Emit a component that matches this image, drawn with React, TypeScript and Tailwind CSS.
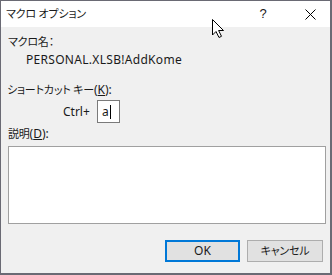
import React from "react";

const base = {
  fontFamily: '"Noto Sans", "Noto Sans CJK JP", sans-serif',
  fontFeatureSettings: '"palt"',
};

// Japanese runs: the original Meiryo UI glyphs are narrower than Noto's
function J({ children }: { children: React.ReactNode }) {
  return <span className="text-[11px] tracking-[-0.2px]">{children}</span>;
}

// Mouse pointer captured in the screenshot
function Cursor() {
  return (
    <svg
      className="absolute left-[210px] top-[17px]"
      width="14"
      height="21"
      viewBox="0 0 14 21"
    >
      <path
        d="M1.5 1.5 L1.5 17 L5 13.5 L8 19.5 L10.5 18.3 L7.6 12.5 L12.5 12.5 Z"
        fill="#fff"
        stroke="#000"
        strokeWidth="1"
        strokeLinejoin="miter"
      />
    </svg>
  );
}

export default function App() {
  return (
    <div
      className="relative w-[332px] h-[275px] flex flex-col border-l border-t border-r-2 border-b-2 border-[#6a6a74] bg-[#f0f0f0] text-[12px] text-[#1a1a1a]"
      style={base}
    >
      {/* Title bar */}
      <div className="h-[26px] bg-white flex items-center pl-[5px] shrink-0">
        <span className="flex-1 leading-none tracking-[-0.6px]">
          <J>マクロ オプション</J>
        </span>
        <span className="w-[16px] text-center text-[13px] mr-[34px]" style={{ fontFamily: '"Liberation Sans", sans-serif' }}>?</span>
        <svg className="mr-[14px]" width="11" height="11" viewBox="0 0 11 11">
          <path d="M0.5 0.5 L10.5 10.5 M10.5 0.5 L0.5 10.5" stroke="#000" strokeWidth="1" />
        </svg>
      </div>

      {/* Body */}
      <div className="flex flex-col px-[6px]">
        <div className="mt-[7px] leading-[16px] pl-[1px]">
          <J>マクロ名：</J>
        </div>
        <div className="mt-[2px] leading-[16px] pl-[19px] tracking-[0.3px]">PERSONAL.XLSB!AddKome</div>
        <div className="mt-[14px] leading-[16px]">
          <J>ショートカット キー</J>(<span className="underline">K</span>):
        </div>
        <div className="mt-[2px] flex items-center h-[23px]">
          <span className="ml-[56px] w-[34px] leading-[16px]">Ctrl+</span>
          <div className="w-[23px] h-[23px] border border-[#7a7a7a] bg-white flex items-center pl-[4px] leading-none">
            a<span className="inline-block w-px h-[14px] bg-black ml-[1px]" />
          </div>
        </div>
        <div className="mt-[3px] leading-[16px] pl-[1px]">
          <J>説明</J>(<span className="underline">D</span>):
        </div>
        <div className="mt-[4px] ml-[1px] w-[318px] h-[78px] border border-[#a0a0a0] bg-white" />
        <div className="mt-[16px] flex justify-end gap-[7px] pr-[1px]">
          <button className="w-[75px] h-[22px] border-2 border-[#0078d7] bg-[#e1e1e1] leading-none">
            OK
          </button>
          <button className="w-[76px] h-[22px] border border-[#adadad] bg-[#e1e1e1] leading-none">
            <J>キャンセル</J>
          </button>
        </div>
      </div>
      <Cursor />
    </div>
  );
}
